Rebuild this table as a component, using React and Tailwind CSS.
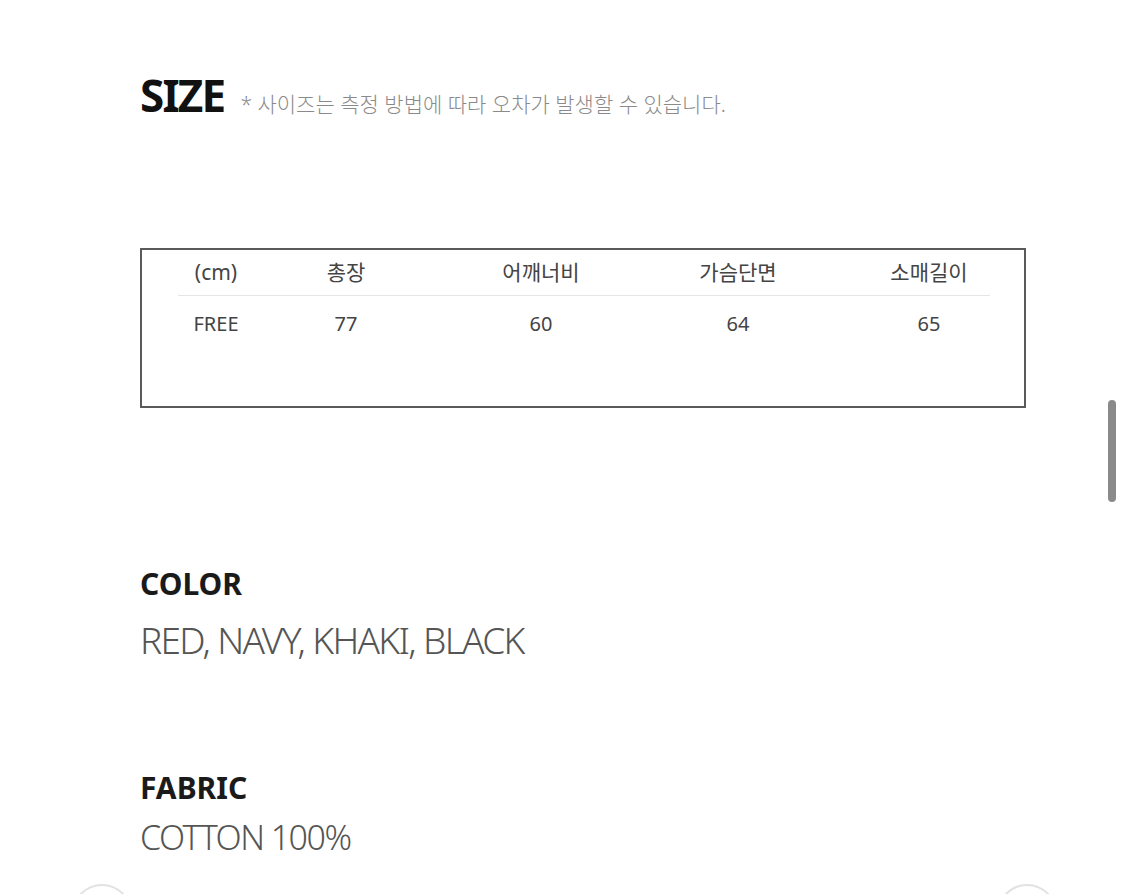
import React from "react";

const font = { fontFamily: '"Noto Sans", "Noto Sans CJK KR", sans-serif' };

const cols = [
  { head: "(cm)", val: "FREE" },
  { head: "총장", val: "77" },
  { head: "어깨너비", val: "60" },
  { head: "가슴단면", val: "64" },
  { head: "소매길이", val: "65" },
];

function SizeTable() {
  return (
    <div className="w-[886px] h-[160px] border-2 border-[#5a5a5a] pl-[36px] pt-[1px]">
      <div className="grid grid-cols-[76px_184px_206px_188px_194px] text-[21px] text-[#444] h-[44px] items-center">
        {cols.map((c) => (
          <div key={c.head} className="text-center">{c.head}</div>
        ))}
      </div>
      <div className="w-[812px] h-px bg-[#e6e6e6]" />
      <div className="grid grid-cols-[76px_184px_206px_188px_194px] text-[20px] text-[#444] h-[56px] items-center">
        {cols.map((c) => (
          <div key={c.head} className="text-center">{c.val}</div>
        ))}
      </div>
    </div>
  );
}

export default function App() {
  return (
    <div className="relative h-[894px] w-[1125px] overflow-hidden bg-white" style={font}>
      <div className="pl-[140px] pt-[69px]">
        <div className="flex items-baseline gap-[16px]">
          <h1 className="text-[44px] font-bold tracking-[-0.04em] text-[#111] leading-[52px]">SIZE</h1>
          <span className="text-[21px] font-light text-[#8a8a8a]">* 사이즈는 측정 방법에 따라 오차가 발생할 수 있습니다.</span>
        </div>

        <div className="mt-[127px]">
          <SizeTable />
        </div>

        <div className="mt-[156px]">
          <h2 className="text-[30px] font-bold text-[#1a1a1a] leading-[40px]">COLOR</h2>
          <p className="mt-[12px] text-[37px] font-light text-[#555] tracking-[-0.045em] leading-[48px]">RED, NAVY, KHAKI, BLACK</p>
        </div>

        <div className="mt-[104px]">
          <h2 className="text-[30px] font-bold text-[#1a1a1a] leading-[40px]">FABRIC</h2>
          <p className="mt-[7px] text-[34px] font-light text-[#555] tracking-[-0.045em] leading-[44px]">COTTON 100%</p>
        </div>
      </div>

      <div className="absolute left-[1108px] top-[400px] h-[102px] w-[8px] rounded-full bg-[#8a8a8a]" />

      <div className="absolute left-[72px] top-[884px] h-[60px] w-[60px] rounded-full border-2 border-[#e2e2e2] bg-white" />
      <div className="absolute left-[997px] top-[884px] h-[60px] w-[60px] rounded-full border-2 border-[#e2e2e2] bg-white" />
    </div>
  );
}
